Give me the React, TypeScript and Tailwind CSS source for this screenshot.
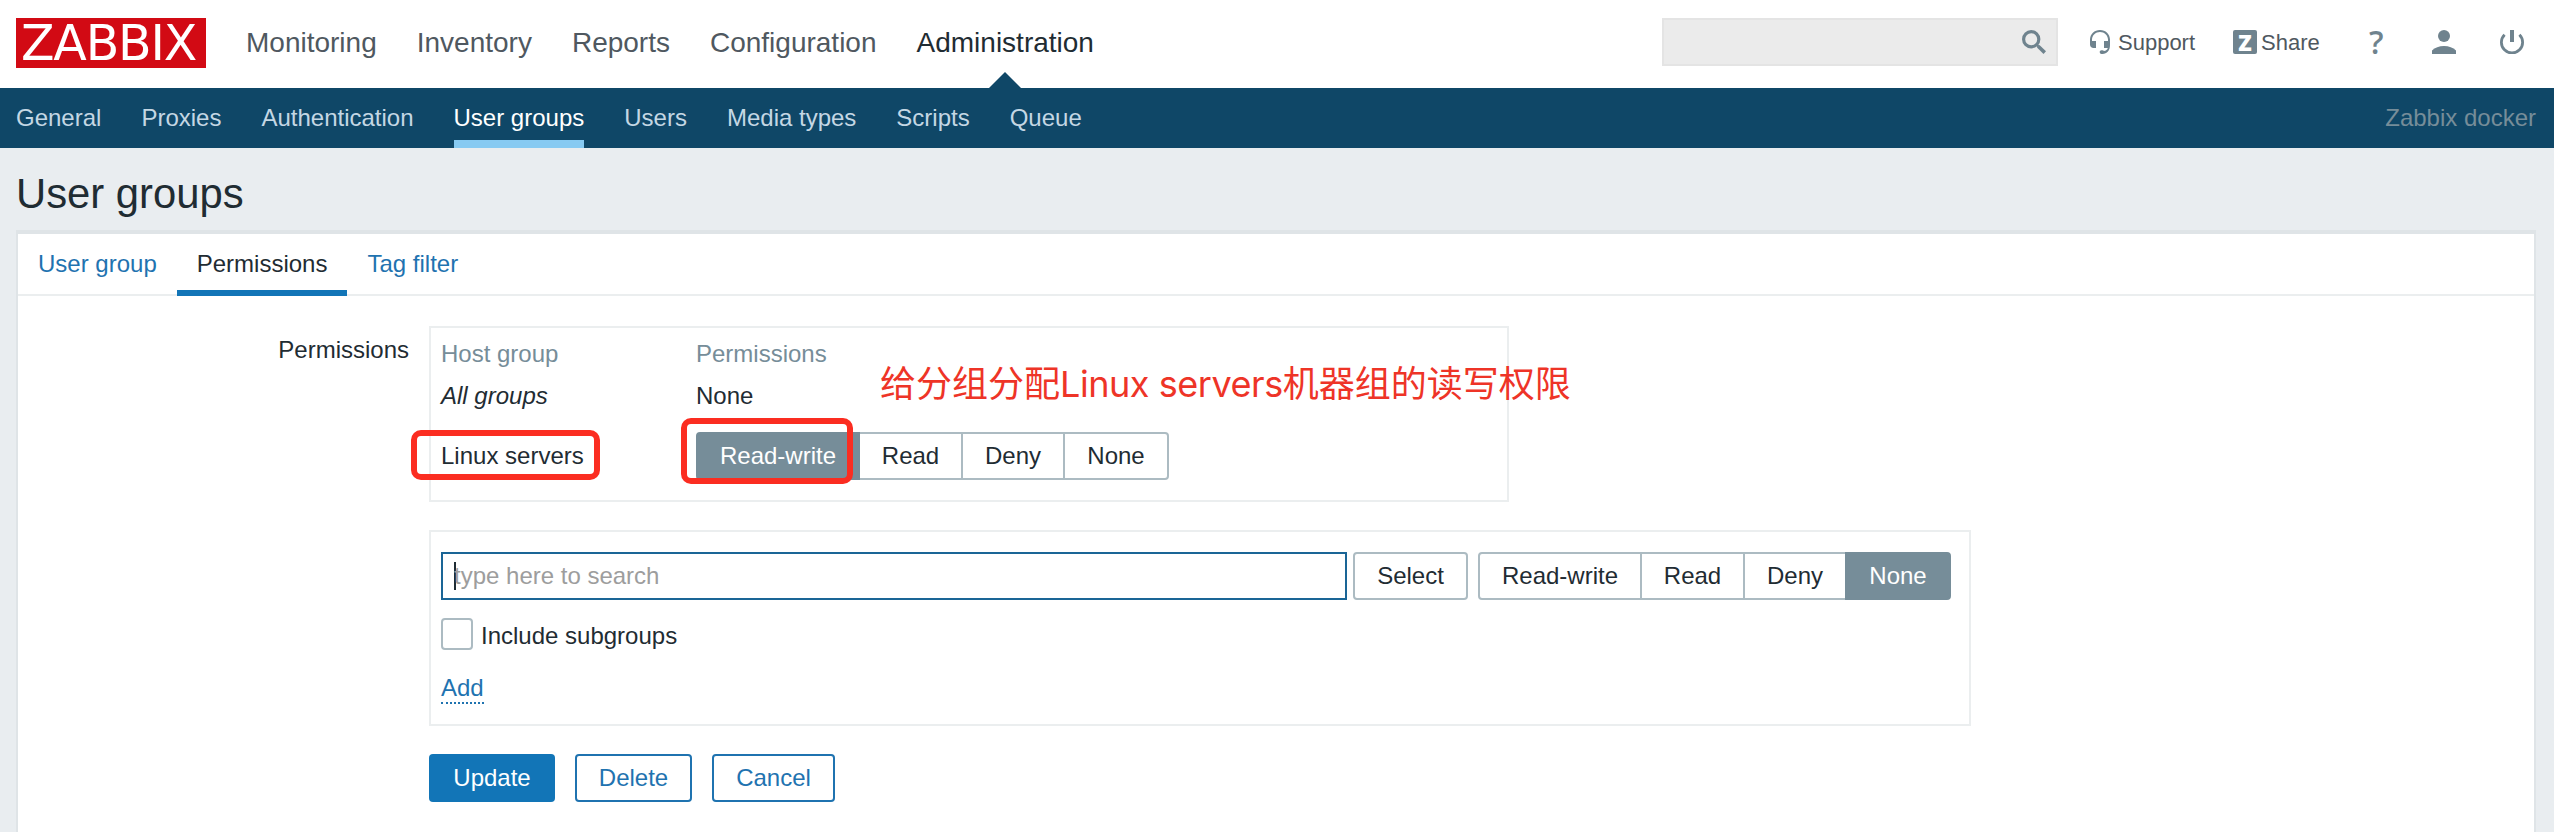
import { useState } from "react";

const topMenu = ["Monitoring", "Inventory", "Reports", "Configuration", "Administration"];
const subMenu = ["General", "Proxies", "Authentication", "User groups", "Users", "Media types", "Scripts", "Queue"];
const levels = ["Read-write", "Read", "Deny", "None"];
const segWidths = ["w-[164px]", "w-[105px]", "w-[104px]", "w-[106px]"];

function Segmented({ initial }: { initial: string }) {
  const [value, setValue] = useState(initial);
  return (
    <div className="flex">
      {levels.map((l, i) => (
        <button
          key={l}
          onClick={() => setValue(l)}
          className={`${segWidths[i]} -mr-[2px] h-12 border-2 text-center leading-[44px] last:mr-0 first:rounded-l-[4px] last:rounded-r-[4px] ${
            l === value ? "relative border-[#768d99] bg-[#768d99] text-white" : "border-[#acbbc2]"
          }`}
        >
          {l}
        </button>
      ))}
    </div>
  );
}

function SearchIcon() {
  return (
    <svg viewBox="0 0 24 24" className="size-6" fill="none" stroke="#6f838e">
      <circle cx="9.2" cy="9.2" r="7.6" strokeWidth="3.2" />
      <path d="M15 15l1.5 1.5" strokeWidth="2.4" />
      <path d="M16.2 16.2l6.6 6.4" strokeWidth="3.6" />
    </svg>
  );
}

function HeadsetIcon() {
  return (
    <svg viewBox="0 0 20 24" className="h-6 w-5" fill="#6f838e">
      <path d="M10 0C4.4 0 0 4.2 0 9.6V14.5C0 16.5 1.5 18 3.500 18H6V11H2V9.600C2 5.400 5.600 2 10 2S18 5.400 18 9.600V11H14V18H17.800C17.300 19.800 16 20.800 14 21C13.600 20.500 13 20.200 12.200 20.200H11.500C10.500 20.200 9.700 21 9.700 22S10.500 24 11.500 24H12.500C17 23.600 20 20.500 20 15V9.600C20 4.200 15.600 0 10 0Z" />
    </svg>
  );
}

function UserIcon() {
  return (
    <svg viewBox="0 0 24 24" className="size-6" fill="#6f838e">
      <circle cx="12" cy="6" r="6" />
      <path d="M0 24V20.500C3 17.500 7 16 12 16S21 17.500 24 20.500V24Z" />
    </svg>
  );
}

function PowerIcon() {
  return (
    <svg viewBox="0 0 24 24" className="size-6" fill="none" stroke="#6f838e">
      <path d="M4.600 4.800A10.600 10.600 0 1 0 19.400 4.800" strokeWidth="2.800" />
      <path d="M12 0V12" strokeWidth="4" />
    </svg>
  );
}

export default function App() {
  return (
    <div className="flex h-[832px] w-[2554px] flex-col overflow-hidden bg-[#e9edf0] font-['Liberation_Sans',Arial,sans-serif] text-[24px] leading-7 text-[#1f2c33]">
      <header className="flex h-[88px] shrink-0 bg-white pt-[18px] pl-4">
        <div className="flex h-[50px] w-[190px] items-center bg-[#d20a14] pt-[2px] pl-[5px] text-white">
          <span className="font-['DejaVu_Sans',sans-serif] text-[49px] leading-[48px] tracking-[-1.2px]">ZABBIX</span>
        </div>
        <nav className="ml-5 flex text-[28px] leading-[50px] text-[#4f5860]">
          {topMenu.map((m) =>
            m === "Administration" ? (
              <a key={m} className="relative px-5 text-[#1f2c33]">
                {m}
                <svg viewBox="0 0 32 16" className="absolute top-[54px] left-1/2 h-4 w-8 -translate-x-1/2" fill="#0f4767">
                  <path d="M16 0L32 16H0Z" />
                </svg>
              </a>
            ) : (
              <a key={m} className="px-5">
                {m}
              </a>
            ),
          )}
        </nav>
        <div className="mr-[30px] ml-auto flex text-[22px] leading-[26px] text-[#4f5860]">
          <div className="flex h-12 w-[396px] items-center justify-end border-2 border-[#e4e4e4] bg-[#ebebeb] pr-[10px]">
            <SearchIcon />
          </div>
          <div className="ml-8 flex h-12 w-[143px] items-center gap-2">
            <HeadsetIcon />
            <span className="pt-[2px]">Support</span>
          </div>
          <div className="flex h-12 w-[136px] items-center gap-1">
            <span className="flex size-6 items-center justify-center rounded-[2px] bg-[#6f838e] font-['Open_Sans',sans-serif] text-[22px] leading-6 font-extrabold text-white">Z</span>
            <span className="pt-[2px]">Share</span>
          </div>
          <div className="flex h-12 w-[63px] items-center font-['Open_Sans',sans-serif] text-[32px] font-semibold text-[#6f838e]">?</div>
          <div className="flex h-12 w-[68px] items-center">
            <UserIcon />
          </div>
          <div className="flex h-12 items-center">
            <PowerIcon />
          </div>
        </div>
      </header>

      <div className="flex h-[60px] shrink-0 justify-between bg-[#0f4767] px-4 pr-[18px] leading-[60px] text-[#c4d7e4]">
        <nav className="flex gap-10">
          {subMenu.map((m) => (
            <a key={m} className={m === "User groups" ? "h-[60px] border-b-8 border-[#87caf2] text-white" : "h-[60px]"}>
              {m}
            </a>
          ))}
        </nav>
        <span className="text-[#768d99]">Zabbix docker</span>
      </div>

      <h1 className="h-[82px] shrink-0 pl-4 text-[41.8px] leading-[92px]">User groups</h1>

      <main className="mr-[18px] ml-4 flex-1 border-2 border-t-4 border-b-0 border-[#dfe4e7] bg-white">
        <div className="flex h-[62px] border-b-2 border-[#ebeeef] leading-[60px] text-[#1f73b0]">
          <a className="px-5">User group</a>
          <a className="h-[62px] border-b-[6px] border-[#1275b7] px-5 text-[#1f2c33]">Permissions</a>
          <a className="px-5">Tag filter</a>
        </div>

        <div className="flex pt-[30px]">
          <div className="w-[391px] pt-[10px] text-right">Permissions</div>
          <div className="ml-5 flex flex-col">
            <div className="relative flex h-[176px] w-[1080px] flex-col border-2 border-[#ebeeef] pl-[10px]">
              <div className="flex pt-3 text-[#768d99]">
                <span className="w-[255px]">Host group</span>
                <span>Permissions</span>
              </div>
              <div className="flex pt-[14px]">
                <span className="w-[255px] italic">All groups</span>
                <span>None</span>
              </div>
              <div className="flex items-center pt-[22px]">
                <span className="w-[255px]">Linux servers</span>
                <Segmented initial="Read-write" />
              </div>
              <div className="absolute top-[102px] -left-5 h-[50px] w-[189px] rounded-[10px] border-[6px] border-[#fb2d21]" />
              <div className="absolute top-[90px] left-[250px] h-[66px] w-[172px] rounded-[10px] border-[6px] border-[#fb2d21]" />
              <p className="absolute top-[30px] left-[449px] font-['Inter','Noto_Sans_CJK_SC',sans-serif] text-[36px] leading-[52px] whitespace-nowrap text-[#ee3427]">
                给分组分配<span className="tracking-[-0.45px]">Linux servers</span>机器组的读写权限
              </p>
            </div>

            <div className="mt-7 flex h-[196px] w-[1542px] flex-col border-2 border-[#ebeeef] pt-5 pl-[10px]">
              <div className="flex">
                <div className="flex h-12 w-[906px] items-center border-2 border-[#1a6596] pl-[11px] text-[#9d9d9d]">
                  <i className="-mr-[2px] h-7 w-[2px] bg-[#1f2c33]" />
                  <span>type here to search</span>
                </div>
                <button className="mr-[10px] ml-[6px] h-12 w-[115px] rounded-[4px] border-2 border-[#acbbc2]">Select</button>
                <Segmented initial="None" />
              </div>
              <label className="flex h-[50px] items-center gap-2 pt-[18px]">
                <span className="size-8 rounded-[4px] border-2 border-[#acbbc2]" />
                <span className="pt-[3px]">Include subgroups</span>
              </label>
              <a className="mt-[24px] h-[30px] w-[43px] border-b-2 border-dotted border-[#1f73b0] text-[#1f73b0]">Add</a>
            </div>

            <div className="mt-7 flex gap-5 text-[#1f73b0]">
              <button className="h-12 w-[126px] rounded-[4px] bg-[#1275b7] text-white">Update</button>
              <button className="h-12 w-[117px] rounded-[4px] border-2 border-[#1f73b0]">Delete</button>
              <button className="h-12 w-[123px] rounded-[4px] border-2 border-[#1f73b0]">Cancel</button>
            </div>
          </div>
        </div>
      </main>
    </div>
  );
}
